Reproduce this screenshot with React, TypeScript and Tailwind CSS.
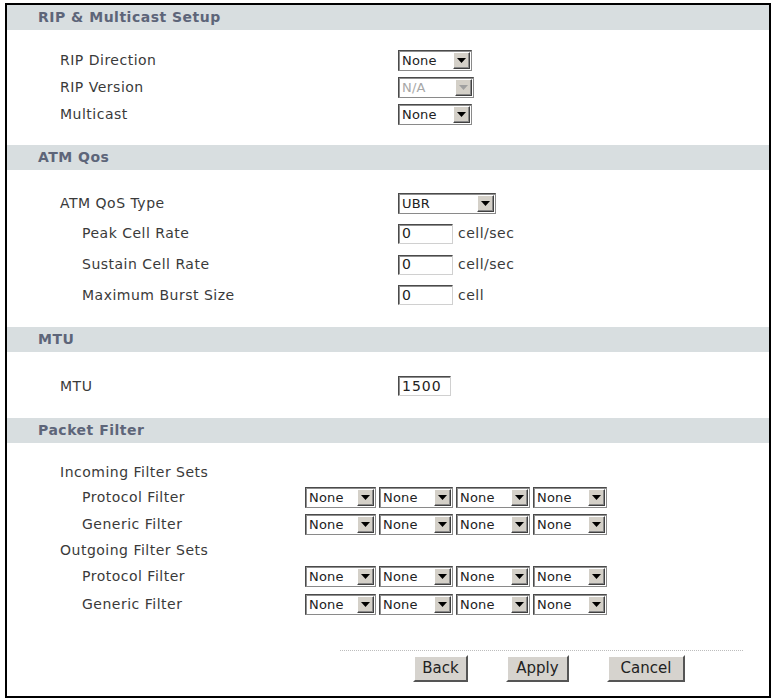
import React from "react";

const font = { fontFamily: '"DejaVu Sans", Verdana, sans-serif' };

const Arrow = ({ disabled }: { disabled?: boolean }) => (
  <span className="flex h-[17px] w-[17px] items-center justify-center border border-t-white border-l-white border-b-[#404040] border-r-[#404040] bg-[#d4d0c8] shadow-[inset_-1px_-1px_0_#8a8a8a]">
    <svg width="9" height="5" viewBox="0 0 9 5">
      <path d="M0 0h9L4.5 5z" fill={disabled ? "#a0a0a0" : "#000"} />
    </svg>
  </span>
);

const Select = ({ value, w = 74, disabled }: { value: string; w?: number; disabled?: boolean }) => (
  <div
    className="flex h-[21px] items-center justify-between border border-t-[#4a4a4a] border-l-[#4a4a4a] border-b-[#8a8a8a] border-r-[#8a8a8a] bg-white pl-[3px] pr-[1px] shadow-[inset_1px_1px_0_#8f8f8f]"
    style={{ width: w }}
  >
    <span className={`text-[13px] leading-none tracking-[0.2px] ${disabled ? "text-[#a8a8a8]" : "text-[#222]"}`}>{value}</span>
    <Arrow disabled={disabled} />
  </div>
);

const Input = ({ value, w = 55 }: { value: string; w?: number }) => (
  <div
    className="flex h-[20px] items-center border border-t-[#4a4a4a] border-l-[#4a4a4a] border-b-[#d0d0d0] border-r-[#d0d0d0] bg-white pl-[3px] text-[14px] tracking-[1px] text-[#222] shadow-[inset_1px_1px_0_#8f8f8f]"
    style={{ width: w }}
  >
    {value}
  </div>
);

const Header = ({ title }: { title: string }) => (
  <div className="flex h-[25px] items-center bg-[#d8dee0] pl-[31px] text-[14px] font-bold tracking-[0.5px] text-[#5d6579]">
    {title}
  </div>
);

const Row = ({ label, indent, h, children }: { label: string; indent?: boolean; h: number; children?: React.ReactNode }) => (
  <div className="flex items-center" style={{ height: h }}>
    <div className={`w-[391px] text-[14px] tracking-[0.5px] text-[#3a3a3a] ${indent ? "pl-[75px]" : "pl-[53px]"}`}>{label}</div>
    {children}
  </div>
);

const Unit = ({ text }: { text: string }) => (
  <span className="ml-[5px] text-[14px] tracking-[0.5px] text-[#3a3a3a]">{text}</span>
);

const FilterRow = ({ label, indent, h, selects }: { label: string; indent?: boolean; h: number; selects?: boolean }) => (
  <div className="flex items-center" style={{ height: h }}>
    <div className={`w-[298px] text-[14px] tracking-[0.5px] text-[#3a3a3a] ${indent ? "pl-[75px]" : "pl-[53px]"}`}>{label}</div>
    {selects && (
      <div className="flex gap-[3px]">
        <Select value="None" w={71} />
        <Select value="None" w={74} />
        <Select value="None" w={74} />
        <Select value="None" w={74} />
      </div>
    )}
  </div>
);

const Button = ({ label, w }: { label: string; w: number }) => (
  <button
    className="flex h-[27px] items-center justify-center border-2 border-t-white border-l-white border-b-[#555] border-r-[#555] bg-[#d6d3ce] text-[15px] text-[#222]"
    style={{ width: w }}
  >
    {label}
  </button>
);

export default function App() {
  return (
    <div className="h-[699px] w-[773px] bg-white pl-[5px] pt-[3px]" style={font}>
      <div className="flex h-[695px] w-[766px] flex-col border-2 border-black">
        <Header title="RIP & Multicast Setup" />
        <div className="py-[17px]">
          <Row label="RIP Direction" h={27}>
            <Select value="None" />
          </Row>
          <Row label="RIP Version" h={27}>
            <Select value="N/A" w={76} disabled />
          </Row>
          <Row label="Multicast" h={27}>
            <Select value="None" />
          </Row>
        </div>

        <Header title="ATM Qos" />
        <div className="pt-[18px] pb-[17px]">
          <Row label="ATM QoS Type" h={30}>
            <Select value="UBR" w={98} />
          </Row>
          <Row label="Peak Cell Rate" indent h={31}>
            <Input value="0" />
            <Unit text="cell/sec" />
          </Row>
          <Row label="Sustain Cell Rate" indent h={31}>
            <Input value="0" />
            <Unit text="cell/sec" />
          </Row>
          <Row label="Maximum Burst Size" indent h={30}>
            <Input value="0" />
            <Unit text="cell" />
          </Row>
        </div>

        <Header title="MTU" />
        <div className="pt-[19px] pb-[17px]">
          <Row label="MTU" h={30}>
            <Input value="1500" w={53} />
          </Row>
        </div>

        <Header title="Packet Filter" />
        <div className="pt-[17px]">
          <FilterRow label="Incoming Filter Sets" h={24} />
          <FilterRow label="Protocol Filter" indent h={26} selects />
          <FilterRow label="Generic Filter" indent h={28} selects />
          <FilterRow label="Outgoing Filter Sets" h={24} />
          <FilterRow label="Protocol Filter" indent h={28} selects />
          <FilterRow label="Generic Filter" indent h={28} selects />
        </div>

        <div className="mt-[32px] ml-[333px] w-[403px] border-t border-dotted border-[#bdbdbd]" />
        <div className="mt-[4px] flex gap-[38px] pl-[406px]">
          <Button label="Back" w={55} />
          <Button label="Apply" w={63} />
          <Button label="Cancel" w={78} />
        </div>
      </div>
    </div>
  );
}
